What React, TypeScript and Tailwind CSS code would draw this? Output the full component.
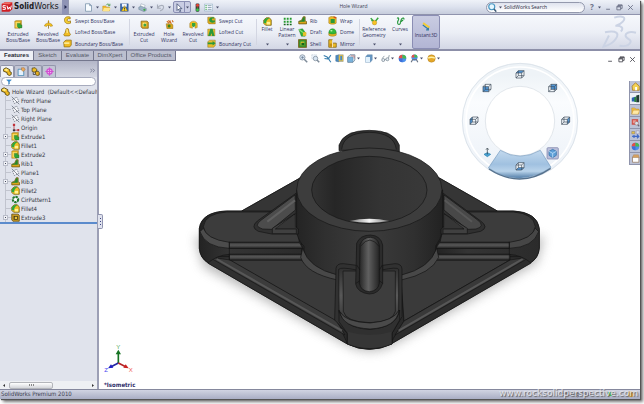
import type { ReactNode } from "react";

const glyphs: Record<string, ReactNode> = {
  extrude: (<><path d="M2 3l4-2h14v17l-4 4H2z" fill="#d9a51c" stroke="#8a6a12" /><path d="M4 5h12v15H4z" fill="#f8dc62" /><path d="M9 9h8v4l4 0v8h-9l-3-4z" fill="#30a53a" stroke="#14661d" /></>),
  revolve: (<><path d="M12 1v22" stroke="#8a6a12" strokeWidth="2" /><path d="M1 16c1-6 7-8 11-8s10 2 11 8l-6 1c-1-2-3-3-5-3s-4 1-5 3z" fill="#f2bf1d" stroke="#8a6a12" /><path d="M9 6l3-4 3 4z" fill="#c98d10" /></>),
  sweep: (<><path d="M19 3c-9-3-16 1-15 9 1 8 8 10 16 7v-6c-5 2-9 2-9-2s4-5 8-3z" fill="#f7cf2e" stroke="#9a7410" strokeWidth="2" /></>),
  loft: (<><path d="M8 3c3-3 7-2 7 2 0 5 2 8 5 12l-3 4H4l-2-4c4-3 5-8 6-14z" fill="#f3be22" stroke="#9a7410" strokeWidth="2" /><path d="M9 5c3-1 2 5 2 8" stroke="#fff2a0" strokeWidth="3" fill="none" /></>),
  boundary: (<><path d="M2 8l6-5h14v13l-4 5H3z" fill="#f0bb23" stroke="#92700f" strokeWidth="2" /><path d="M3 9h14v4H3z" fill="#fff0a0" /></>),
  cut: (<><path d="M3 3h16l3 3v16H6l-3-4z" fill="#dca61c" stroke="#826311" strokeWidth="2" /><path d="M7 7h10v10H7z" fill="#fae67b" /><circle cx="13" cy="13" r="4" fill="#3ba344" /></>),
  hole: (<><path d="M3 10h15l3 3v10H5z" fill="#d9a51c" stroke="#7a5b0d" /><circle cx="11" cy="16" r="4" fill="#37821f" /><path d="M8 9l7-7m-6-1l8 8m2-8l3 5M5 3l3 3" stroke="#d56a17" strokeWidth="3" /></>),
  revcut: (<><path d="M2 9c4-8 16-8 20 0v11l-6 2v-7H9v7l-7-2z" fill="#edbd23" stroke="#856410" /><path d="M8 8h9v7l-5 4-4-4z" fill="#35a53e" /></>),
  gsweep: (<><path d="M2 3h16l4 4v14H5l-3-4z" fill="#e0ac1e" stroke="#705810" /><path d="M19 4C8 2 5 7 6 12s8 8 15 4v-5c-4 2-8 1-8-2s3-3 6-2z" fill="#2b983a" /></>),
  gloft: (<><path d="M2 3h19v18H2z" fill="#e9bd2b" stroke="#705810" /><path d="M9 2h6l5 19h-6l-2-7-3 7H3z" fill="#2b983a" /></>),
  gbound: (<><path d="M2 7l5-4h15v14l-4 5H2z" fill="#e9bd2b" stroke="#705810" /><path d="M2 9h13V5l8 6-8 6v-3H2z" fill="#2b983a" /></>),
  fillet: (<><path d="M2 8l7-6h8l5 6v14H7L2 17z" fill="#efbf23" stroke="#6f5b0b" strokeWidth="2" /><path d="M2 15C2 5 9 2 17 3c-6 3-8 6-9 14z" fill="#2fa83a" /><path d="M10 13h9v7h-9z" fill="#fff293" /></>),
  pattern: (<><path d="M2 2h5v5H2zM10 2h5v5h-5zM18 2h5v5h-5zM2 10h5v5H2zM10 10h5v5h-5zM18 10h5v5h-5z" fill="#249a2f" /><path d="M2 18h5v4H2zM10 18h5v4h-5zM18 18h5v4h-5z" fill="#14661d" /></>),
  rib: (<><path d="M2 14l7-2 5-10h5v11l4 2v6H2z" fill="#d9a51c" stroke="#6a5410" strokeWidth="2" /><path d="M2 14l8-2 4-9h4v12H5z" fill="#26872f" /></>),
  draft: (<><path d="M2 4l10-2 9 12-2 8H9z" fill="#2eae38" stroke="#136c1d" /><path d="M13 11h9v10h-9z" fill="#eac02a" /><path d="M3 4l10 8" stroke="#85e276" strokeWidth="3" /></>),
  shell: (<><path d="M2 2h20v20H2z" fill="#2aa334" stroke="#725c10" strokeWidth="3" /><path d="M7 7h10v10H7z" fill="#efc32c" /><path d="M9 10h8v7H9z" fill="#14661d" /></>),
  wrap: (<><path d="M2 4c4-4 16-4 20 0v15c-4 4-16 4-20 0z" fill="#e9b824" stroke="#856410" /><path d="M7 8h11v11H7z" fill="#28993a" /><path d="M15 3l7 2" stroke="#d74d22" strokeWidth="4" /></>),
  dome: (<><path d="M2 13h20v6c-5 4-15 4-20 0z" fill="#e4b320" stroke="#7d610f" /><path d="M2 13C2-2 22-2 22 13c-5 4-15 4-20 0z" fill="#32b93b" stroke="#18751f" /><ellipse cx="9" cy="7" rx="3" ry="2" fill="#c1f6b0" /></>),
  mirror: (<><path d="M2 2h10v9h10v11H2z" fill="#ebbb27" stroke="#826311" strokeWidth="2" /><path d="M12 2v20" stroke="#fff" strokeWidth="2" /><path d="M4 12h7v8H4z" fill="#c38c14" /></>),
  refgeo: (<><path d="M2 3l8 9M22 2l-9 11" stroke="#37a83e" strokeWidth="4" /><path d="M3 10l6-1" stroke="#37a83e" strokeWidth="3" /><circle cx="12" cy="15" r="6" fill="#f6c325" stroke="#aa7210" /></>),
  curves: (<><path d="M3 4c3-4 6 0 3 5s-2 11 2 11c6 0 3-11 7-15s7-2 6 2M11 14l8-6" fill="none" stroke="#23953a" strokeWidth="3" /></>),
  instant: (<><path d="M3 3l17 12" stroke="#f4cd36" strokeWidth="5" /><path d="M2 8l16 12m-1-5v6h-6" stroke="#317ba5" strokeWidth="3" fill="none" /></>),
  doc: <path d="M4 2h11l5 5v15H4zM15 2v5h5" fill="#f8fcff" stroke="#7790a8" strokeWidth="2" />,
  open: (<><path d="M2 8h8l2 3h8v10H2z" fill="#f2bb32" stroke="#b18014" /><path d="M5 13h18l-4 9H2z" fill="#ffe58b" /><path d="M11 6c3-5 7-4 9 0m1-4v5h-5" fill="none" stroke="#38953d" strokeWidth="2" /></>),
  save: (<><path d="M1 2h21v20H1z" fill="#3465ad" stroke="#1d3e79" /><path d="M5 2h13v8H5z" fill="#eff5ff" /><path d="M12 7l8 14H4z" fill="#ffd52d" stroke="#8f6d00" /><path d="M12 12v5m0 1v2" stroke="#222" strokeWidth="2" /></>),
  print: (<><path d="M8 2l11 4-3 8-10-4z" fill="#fff" stroke="#708698" /><path d="M2 11l6-3 14 6v6l-6 3L2 17z" fill="#9cb3c6" stroke="#5d7287" /><circle cx="17" cy="18" r="3" fill="#42a948" /></>),
  undo: <path d="M4 4v10h9M4 13C10 4 22 4 20 13c-1 5-5 7-9 8" fill="none" stroke="#a8aebb" strokeWidth="3" />,
  cursor: <path d="M8 2v18l4-4 3 7 3-1-3-7h6z" fill="#fff" stroke="#36476c" strokeWidth="2" />,
  light: (<><rect x="7" y="1" width="10" height="22" rx="3" fill="#383c3e" /><circle cx="12" cy="6" r="4" fill="#e54336" /><circle cx="12" cy="12" r="2" fill="#736527" /><circle cx="12" cy="18" r="4" fill="#3dc54c" /></>),
  options: (<><path d="M1 3h22v18H1z" fill="#f4faff" stroke="#5a86a0" /><path d="M4 7h3M4 12h3M4 17h3" stroke="#3fa64a" strokeWidth="3" /><path d="M10 7h10M10 12h10M10 17h10" stroke="#7990a1" strokeWidth="2" /></>),
  part: (<><path d="M1 6l7-4 10 5v5l4 2v6l-5 3-6-4v-4L1 11z" fill="#edb922" stroke="#3c330d" strokeWidth="2" /><path d="M3 7l6-3 6 4-6 3z" fill="#ffed86" /></>),
  props: (<><path d="M3 6h15v17H3z" fill="#e6f2fd" stroke="#367fae" strokeWidth="2" /><path d="M12 2h7l3 5-6 5-4-4z" fill="#eba95d" stroke="#8d5a28" /></>),
  config: (<><path d="M3 3l8-1 4 4v5l-4 3-8-2z" fill="#efbd25" stroke="#4d4215" strokeWidth="2" /><path d="M12 12l7-1 3 4v6l-5 2-5-3z" fill="#e2ad22" stroke="#4d4215" strokeWidth="2" /><path d="M6 14v6h5" fill="none" stroke="#333" strokeWidth="2" /></>),
  target: (<><circle cx="12" cy="12" r="7" fill="#f3b5f2" stroke="#d150d1" strokeWidth="3" /><path d="M12 1v22M1 12h22" stroke="#d150d1" strokeWidth="3" /></>),
  plane: (<><path d="M4 9l11-6 6 11-12 6z" fill="#f6f7fa" stroke="#6a707c" strokeWidth="2" strokeDasharray="4 2" /><path d="M2 2l20 20" stroke="#6a707c" strokeWidth="2" /></>),
  origin: (<><path d="M8 3v16h12" fill="none" stroke="#b72d35" strokeWidth="2" /><path d="M5 2h6v6H5zM17 16h5v6h-5z" fill="#bf3039" /><path d="M5 17h6v5H5z" fill="#30343f" /></>),
  circ: (<><circle cx="12" cy="12" r="7" fill="none" stroke="#22782c" strokeWidth="6" strokeDasharray="6 2" /><circle cx="12" cy="12" r="4" fill="#fff" /></>),
  treecut: (<><path d="M2 3h17l3 3v16H5l-3-4z" fill="#cb9b22" stroke="#5a460b" strokeWidth="2" /><path d="M7 8h11v10H7z" fill="#443a15" /><path d="M10 10h6v6h-6z" fill="#e9c443" /></>),
  filter: <path d="M2 3h20l-8 8v9l-4 2V11z" fill="#348fd3" stroke="#1d5b9a" />,
  zoom: (<><circle cx="9" cy="9" r="7" fill="#d9e6f3" stroke="#7e8b99" strokeWidth="2" /><path d="M14 14l8 8" stroke="#7e8b99" strokeWidth="4" /><path d="M6 9h7M9 6v7" stroke="#65788c" strokeWidth="2" /></>),
  zoomarea: (<><path d="M2 2h13v11H2z" fill="#eef5fc" stroke="#90a1b2" strokeDasharray="3 2" /><circle cx="12" cy="12" r="6" fill="#d9e6f3" stroke="#7e8b99" strokeWidth="2" /><path d="M16 16l6 6" stroke="#7e8b99" strokeWidth="4" /></>),
  prev: <path d="M2 4l9 4 10 14M4 12l14 2M13 14l8-11" fill="none" stroke="#397eae" strokeWidth="3" />,
  section: (<><path d="M2 4l8-2v19l-8-2z" fill="#4a8bc2" stroke="#315c88" /><path d="M10 2h12v18H10z" fill="#edc33e" stroke="#5b779a" /><path d="M14 5h5v12h-5z" fill="#4a8bc2" /></>),
  orient: (<><path d="M2 8l6-6h13v14l-5 6H2z" fill="#d9edfc" stroke="#687d91" strokeWidth="2" /><path d="M2 8h14v14H2z" fill="#79b3dc" stroke="#687d91" /><path d="M10 5h9v7" fill="none" stroke="#bf6c67" strokeWidth="2" /></>),
  display: (<><path d="M4 8l5-6h13v14l-5 6H4z" fill="#6797c3" stroke="#56789a" /><path d="M4 8h12v14H4z" fill="#e2f1fc" /></>),
  glasses: (<><circle cx="6" cy="16" r="4" fill="#e9eff5" stroke="#778591" strokeWidth="2" /><circle cx="17" cy="14" r="4" fill="#e9eff5" stroke="#778591" strokeWidth="2" /><path d="M10 15l3-1M3 12l6-7M20 11l2-8" stroke="#778591" strokeWidth="2" /></>),
  ball: (<><circle cx="12" cy="12" r="10" fill="#4b91ec" /><path d="M12 12V2A10 10 0 0 0 2 12z" fill="#e74e46" /><path d="M12 12H2a10 10 0 0 0 10 10z" fill="#3f6fd8" /><path d="M12 12V2a10 10 0 0 1 10 10z" fill="#47b84e" /></>),
  scene: (<><circle cx="12" cy="9" r="8" fill="#4b91ec" /><path d="M12 9V1a8 8 0 0 0-8 8z" fill="#e74e46" /><path d="M12 9V1a8 8 0 0 1 8 8z" fill="#47b84e" /><path d="M3 22l4-7h10l4 7" fill="none" stroke="#697586" strokeWidth="3" /></>),
  sun: (<><circle cx="12" cy="12" r="10" fill="#e5a727" stroke="#9e711a" /><path d="M3 11c7-4 11-4 18 0" stroke="#fff1a5" strokeWidth="4" fill="none" /></>),
  mag: (<><circle cx="10" cy="10" r="8" fill="#e6f7ff" stroke="#4596c2" strokeWidth="3" /><path d="M16 16l6 7" stroke="#3d5974" strokeWidth="4" /></>),
  home: (<><path d="M3 11L12 2l10 9v11H4z" fill="#f3d254" stroke="#a7771d" strokeWidth="2" /><path d="M11 13h5v9h-5z" fill="#fff" /></>),
  library: (<><path d="M2 10l9-3v13H2z" fill="#2b5fae" /><path d="M9 10l5-4v15H9z" fill="#248b37" /><path d="M14 4l8-2v20h-8z" fill="#203b32" /></>),
  folder: (<><path d="M2 5h8l3 3h8v13H2z" fill="#eebd42" stroke="#b58127" /><path d="M6 11h17l-4 11H2z" fill="#ffe9a6" stroke="#b58127" /></>),
  photo: (<><path d="M2 3h17v15H2z" fill="#ce5049" /><path d="M5 6h9v8H5z" fill="#e89a94" /><circle cx="15" cy="14" r="5" fill="#d8e1e8" stroke="#844" /><path d="M18 18l4 4" stroke="#667" strokeWidth="3" /></>),
  view: (<><path d="M2 4h8v6H2z" fill="#e6c346" stroke="#765" /><path d="M14 2h8v8h-8z" fill="#d8e1ed" stroke="#879" /><path d="M8 21V13m-5 4h18m-5-5l5 5-5 5" fill="none" stroke="#3e68c7" strokeWidth="3" /></>),
  custom: (<><path d="M4 8h17v14H4z" fill="#fff" stroke="#967b63" strokeWidth="2" /><path d="M7 2h13l2 7H4z" fill="#d9a35f" stroke="#967b63" /></>),
};

function Icon({ name, className = "size-2" }: { name: string; className?: string }) {
  return <svg viewBox="0 0 24 24" fill="none" aria-hidden="true" className={`shrink-0 ${className}`}>{glyphs[name]}</svg>;
}

function Caret() {
  return <svg viewBox="0 0 6 6" aria-hidden="true" className="size-[3px] shrink-0"><path d="M0 1h6L3 5z" fill="#4a4f6b" /></svg>;
}

function BigButton({ icon, lines, width, caret = false }: { icon: string; lines: string[]; width: string; caret?: boolean }) {
  return (
    <button className={`flex h-full shrink-0 flex-col items-center pb-[3px] ${caret ? "pt-[2px]" : "pt-[5px]"} ${width}`}>
      <Icon name={icon} className={`size-[9px] ${caret ? "" : "mb-[2px]"}`} />
      {lines.map((l) => <span key={l} className="whitespace-nowrap">{l}</span>)}
      {caret && <span className="mt-auto"><Caret /></span>}
    </button>
  );
}

function SmallColumn({ items, width }: { items: [string, string][]; width: string }) {
  return (
    <div className={`flex h-full shrink-0 flex-col justify-between ${width}`}>
      {items.map(([icon, label]) => (
        <button key={label} className="flex h-[11px] items-center gap-[3px] whitespace-nowrap pl-px">
          <Icon name={icon} className="size-[9px]" />{label}
        </button>
      ))}
    </div>
  );
}

const Divider = () => <div className="my-1 w-px shrink-0 bg-[#d3d6e2]" />;

function Ribbon() {
  return (
    <div className="flex h-9 shrink-0 overflow-hidden border-b-2 border-[#8c8fa8] bg-linear-to-b from-[#f6f8fc] via-[#eceff6] to-[#d3d7e5] pl-[2px] font-['Open_Sans',sans-serif] text-[5px] leading-[6px] text-[#30335f]">
      <BigButton icon="extrude" lines={["Extruded", "Boss/Base"]} width="w-8" />
      <BigButton icon="revolve" lines={["Revolved", "Boss/Base"]} width="w-7" />
      <SmallColumn width="w-[67px]" items={[["sweep", "Swept Boss/Base"], ["loft", "Lofted Boss/Base"], ["boundary", "Boundary Boss/Base"]]} />
      <Divider />
      <BigButton icon="cut" lines={["Extruded", "Cut"]} width="w-7" />
      <BigButton icon="hole" lines={["Hole", "Wizard"]} width="w-[22px]" />
      <BigButton icon="revcut" lines={["Revolved", "Cut"]} width="w-[26px]" />
      <SmallColumn width="w-[50px]" items={[["gsweep", "Swept Cut"], ["gloft", "Lofted Cut"], ["gbound", "Boundary Cut"]]} />
      <Divider />
      <BigButton icon="fillet" lines={["Fillet"]} width="w-5" caret />
      <BigButton icon="pattern" lines={["Linear", "Pattern"]} width="w-5" caret />
      <SmallColumn width="w-[30px]" items={[["rib", "Rib"], ["draft", "Draft"], ["shell", "Shell"]]} />
      <SmallColumn width="w-8" items={[["wrap", "Wrap"], ["dome", "Dome"], ["mirror", "Mirror"]]} />
      <Divider />
      <BigButton icon="refgeo" lines={["Reference", "Geometry"]} width="w-7" caret />
      <BigButton icon="curves" lines={["Curves"]} width="w-6" caret />
      <button aria-pressed="true" className="flex w-7 shrink-0 flex-col items-center justify-center rounded-xs border border-[#8b8eb4] bg-linear-to-b from-[#c9cce2] to-[#b2b5d4] pb-1">
        <Icon name="instant" className="mb-px size-[9px]" />Instant3D
      </button>
      <svg viewBox="0 0 104 100" fill="none" aria-hidden="true" className="mr-[3px] ml-auto h-[33px] w-[35px] shrink-0">
        <g stroke="#cbd3e4" strokeWidth="6">
          <path d="M36 8c26-8 38 0 26 12-5 6-13 10-22 13 18-1 26 6 16 17" />
          <path d="M8 52c36-7 44 4 33 20-9 14-21 20-38 24l17-34" />
          <path d="M102 54c-22-6-34 2-31 11 3 8 20 9 13 20-5 8-17 11-32 8" />
        </g>
      </svg>
    </div>
  );
}

function WindowControls({ dark = false }: { dark?: boolean }) {
  return (
    <div className={`flex items-center gap-[3px] ${dark ? "text-[#4b4c54]" : "text-[#6b7187]"}`}>
      {[["Minimize", "M4 18h13"], ["Restore", "M7 8V3h14v12h-5M3 8h13v12H3zM3 10h13M7 5h14"], ["Close", "M4 4l16 16M20 4L4 20"]].map(([label, d]) => (
        <button key={label} aria-label={label} className="flex size-2 items-center justify-center">
          <svg viewBox="0 0 24 24" fill="none" stroke="currentColor" strokeWidth="3" className="size-[7px]"><path d={d} /></svg>
        </button>
      ))}
    </div>
  );
}

function TitleBar() {
  return (
    <header className="flex h-[15px] shrink-0 items-center border-b border-[#8f93ad] bg-linear-to-b from-[#eff2f8] via-[#dde2ee] to-[#c6ccdc] font-['Open_Sans',sans-serif] text-[5px]">
      <div className="flex h-full w-[69px] shrink-0 items-center gap-px border-r border-[#9599b0] bg-linear-to-b from-[#d5d7e2] to-[#a4a8bf] pl-px">
        <svg viewBox="0 0 36 30" aria-hidden="true" className="h-[10px] w-3 shrink-0">
          <path d="M2 6L12 1h22v21l-9 7H2z" fill="#cf1f25" /><path d="M2 6L12 1h22l-9 6z" fill="#ef6c64" />
          <path d="M14 11H6v5h7v6H5M18 11l3 11 4-7 3 7 3-11" fill="none" stroke="#fff" strokeWidth="3" />
        </svg>
        <h1 className="flex text-[8px] leading-3 text-[#17181c]">
          <span className="font-['DejaVu_Sans_Condensed','DejaVu_Sans',sans-serif] font-bold">Solid</span>
          <span className="font-['DejaVu_Sans',sans-serif]">Works</span>
        </h1>
        <button aria-label="Show menu" className="ml-auto flex h-full w-[6px] items-center justify-center bg-[#8f94b5]">
          <svg viewBox="0 0 6 8" className="h-1 w-[3px]"><path d="M1 0l5 4-5 4z" fill="#20264f" /></svg>
        </button>
      </div>
      <div className="ml-[14px] flex shrink-0 items-center">
        {["doc", "open", "save", "print", "undo"].map((n) => (
          <button key={n} aria-label={n} className="flex h-3 w-[18px] items-center gap-[3px] pl-px"><Icon name={n} className="size-[9px]" /><Caret /></button>
        ))}
        <button aria-label="Select" className="flex h-3 w-[18px] items-center rounded-xs border border-[#8b90b4] bg-[#c9cde3]">
          <Icon name="cursor" className="size-[9px]" /><span className="ml-px flex h-full items-center border-l border-[#8b90b4] pl-px"><Caret /></span>
        </button>
        <button aria-label="Rebuild" className="flex w-3 justify-center"><Icon name="light" className="size-[9px]" /></button>
        <button aria-label="Options" className="flex w-[18px] items-center gap-[3px] pl-px"><Icon name="options" className="size-[9px]" /><Caret /></button>
      </div>
      <span className="min-w-0 flex-1 whitespace-nowrap text-center text-[#3c3f55]">Hole Wizard</span>
      <label className="flex h-[11px] w-[99px] shrink-0 items-center gap-[2px] rounded-full border border-[#9499ad] bg-linear-to-b from-[#dfe3ee] to-white pl-px">
        <Icon name="mag" className="size-[9px]" /><Caret />
        <input aria-label="Search" defaultValue="SolidWorks Search" className="h-2 w-20 min-w-0 bg-transparent text-[#262a3c] outline-none" />
      </label>
      <div className="flex w-[55px] shrink-0 items-center pl-1">
        <button aria-label="Help" className="w-[6px] text-[8px] leading-3 font-bold text-[#6b7187]">?</button>
        <span className="mx-[3px] flex"><Caret /></span>
        <WindowControls />
      </div>
    </header>
  );
}

const tabs: [string, string][] = [["Features", "w-[34px]"], ["Sketch", "w-7"], ["Evaluate", "w-8"], ["DimXpert", "w-[33px]"], ["Office Products", "w-[49px]"]];

const tree: [string, string, boolean][] = [
  ["plane", "Front Plane", false], ["plane", "Top Plane", false], ["plane", "Right Plane", false], ["origin", "Origin", false],
  ["extrude", "Extrude1", true], ["fillet", "Fillet1", false], ["extrude", "Extrude2", true], ["rib", "Rib1", true],
  ["plane", "Plane1", false], ["rib", "Rib3", true], ["fillet", "Fillet2", false], ["circ", "CirPattern1", false],
  ["fillet", "Fillet4", false], ["treecut", "Extrude3", true],
];

function FeaturePanel() {
  return (
    <aside className="relative flex w-[99px] shrink-0 flex-col border-r-2 border-[#9c9fb5] bg-[#e0e3ec] font-['DejaVu_Sans_Condensed','DejaVu_Sans',sans-serif] text-[6px] leading-[9px] text-[#333641]">
      <div className="flex h-4 shrink-0 items-end bg-linear-to-b from-[#b3b6c8] to-[#d5d8e3]">
        {["part", "props", "config", "target"].map((n, i) => (
          <button key={n} aria-label={n} className={`flex h-3 w-[14px] items-center justify-center rounded-t-xs border border-b-0 border-[#9396ab] ${i === 0 ? "bg-[#eff1f6]" : "bg-[#c2c5d4]"}`}><Icon name={n} className="size-[9px]" /></button>
        ))}
        <button aria-label="Expand panel" className="mr-[2px] mb-1 ml-auto flex"><svg viewBox="0 0 14 14" fill="none" stroke="#656a83" strokeWidth="2" className="size-[5px]"><path d="M1 2l5 5-5 5M8 2l5 5-5 5" /></svg></button>
      </div>
      <label className="mx-px flex h-[9px] shrink-0 items-center rounded-full border border-[#a7abbd] bg-white pl-1">
        <Icon name="filter" className="size-[6px]" />
        <input aria-label="Filter tree" className="h-[7px] w-full min-w-0 bg-transparent outline-none" />
      </label>
      <div className="mt-px flex h-[9px] shrink-0 items-center gap-[2px] overflow-hidden whitespace-pre pl-px"><Icon name="part" className="size-[9px]" />Hole Wizard  (Default&lt;&lt;Default</div>
      <ul className="border-b-2 border-[#5b8bcc]">
        {tree.map(([icon, label, expandable]) => (
          <li key={label} className="flex h-[9px] items-center">
            <span className="relative ml-[5px] flex h-full w-[6px] shrink-0 items-center">
              <span className="h-px w-full bg-[#c1c4ce]" />
              <span className="absolute inset-y-0 left-0 w-px bg-[#c1c4ce]" />
              {expandable && <button aria-label={`Expand ${label}`} className="absolute top-[2px] -left-[2px] flex size-[5px] items-center justify-center border border-[#b9bdc9] bg-[#f2f3f7]"><span className="size-px bg-[#42485c]" /></button>}
            </span>
            <Icon name={icon} className="size-[9px]" /><span className="ml-px">{label}</span>
          </li>
        ))}
      </ul>
      <div className="mt-auto flex h-2 shrink-0 items-center justify-between bg-[#eef0f3] px-[3px]">
        <svg viewBox="0 0 4 6" className="h-[3px] w-[2px]"><path d="M4 0v6L0 3z" fill="#333" /></svg>
        <span className="mr-auto ml-1 flex h-[7px] w-11 items-center justify-center gap-px rounded-xs border border-[#b3b5ba] bg-linear-to-b from-white to-[#d3d5d9]">
          <span className="h-[2px] w-px bg-[#888]" /><span className="h-[2px] w-px bg-[#888]" /><span className="h-[2px] w-px bg-[#888]" />
        </span>
        <svg viewBox="0 0 4 6" className="h-[3px] w-[2px]"><path d="M0 0v6l4-3z" fill="#333" /></svg>
      </div>
      <button aria-label="Resize panel" className="absolute top-[153px] -right-[6px] z-10 flex h-[15px] w-[5px] flex-col items-center justify-center gap-[2px] rounded-r-xs border border-l-0 border-[#9094b0] bg-[#dfe2ed]">
        <span className="size-px bg-[#3d4384]" /><span className="size-px bg-[#3d4384]" /><span className="size-px bg-[#3d4384]" />
      </button>
    </aside>
  );
}

function Casting() {
  return (
    <svg viewBox="0 0 1080 705" role="img" aria-label="Cast flange part" className="h-[235px] w-[360px] shrink-0 overflow-visible">
      <defs>
        <linearGradient id="bore"><stop stopColor="#333" /><stop offset=".2" stopColor="#262626" /><stop offset=".6" stopColor="#343434" /><stop offset="1" stopColor="#393939" /></linearGradient>
        <linearGradient id="hub"><stop stopColor="#242424" /><stop offset=".2" stopColor="#303030" /><stop offset=".5" stopColor="#3c3c3c" /><stop offset=".8" stopColor="#303030" /><stop offset="1" stopColor="#222" /></linearGradient>
        <linearGradient id="ridge"><stop stopColor="#252525" /><stop offset=".45" stopColor="#606060" /><stop offset="1" stopColor="#242424" /></linearGradient>
        <linearGradient id="edge" x2="0" y2="1"><stop stopColor="#303030" /><stop offset=".45" stopColor="#585858" /><stop offset="1" stopColor="#292929" /></linearGradient>
        <linearGradient id="side"><stop stopColor="#232323" /><stop offset=".3" stopColor="#343434" /><stop offset="1" stopColor="#2b2b2b" /></linearGradient>
        <linearGradient id="gleam"><stop stopColor="#777" /><stop offset=".5" stopColor="#f5f5f5" /><stop offset="1" stopColor="#777" /></linearGradient>
        <filter id="haze" x="-20%" y="-20%" width="140%" height="140%"><feGaussianBlur stdDeviation="16" /></filter>
      </defs>
      <path d="M15 350L40 440 480 680Q540 705 600 680L1040 430 1062 350z" fill="#888" opacity=".6" filter="url(#haze)" />
      <g stroke="#141414" strokeWidth="2" strokeLinejoin="round">
        <path d="M155 273L330 174H748L922 273H970Q1045 278 1048 330V385Q1045 415 1020 430L603 672Q535 704 472 672L55 430Q30 414 28 385V325Q35 276 110 273z" fill="#292929" />
        <path d="M155 273L330 174H748L922 273 800 320H280z" fill="#353535" />
        <path d="M447 92V75Q462 31 538 31 612 31 628 75V96z" fill="#303030" />
        <path d="M455 88Q460 38 538 37 612 38 619 88" fill="#3a3a3a" />
        <path d="M55 410H335L445 480 440 603 465 655 472 672 55 430z" fill="#303030" />
        <path d="M1022 410H738L633 480 642 603 610 655 603 672 1022 430z" fill="#2c2c2c" />
        <path d="M118 420H335Q362 455 443 477L437 603z" fill="#3a3a3a" />
        <path d="M960 420H740Q710 455 633 477L642 603z" fill="#3a3a3a" />
        <path d="M55 410L120 420 440 603 465 645z" fill="#3c3c3c" />
        <path d="M1022 410L960 420 642 603 615 645z" fill="#393939" />
        <path d="M80 417L456 632M998 417L626 632" fill="none" stroke="#575757" strokeWidth="6" />
        <path d="M28 325Q35 276 110 273H250L335 365V403H118Q80 406 55 428Q30 414 28 385z" fill="url(#side)" />
        <path d="M30 335Q45 382 118 385H338L328 362H118Q55 360 40 325z" fill="#4c4c4c" />
        <path d="M40 320Q45 280 110 276H280L325 345 328 367H118Q45 357 40 320z" fill="#3c3c3c" />
        <path d="M1048 325Q1040 276 970 273H830L740 365V403H958Q996 406 1022 428Q1045 414 1048 385z" fill="url(#side)" />
        <path d="M1046 335Q1031 382 958 385H738L750 362H958Q1020 360 1036 325z" fill="#464646" />
        <path d="M1036 320Q1031 280 970 276H795L755 345 750 367H958Q1030 357 1036 320z" fill="#3c3c3c" />
        <path d="M118 367H328L338 385H118z" fill="url(#edge)" /><path d="M749 367H958V385H738z" fill="url(#edge)" />
        <path d="M118 403H330Q340 400 338 420H118z" fill="url(#edge)" /><path d="M740 403H960V420H738z" fill="url(#edge)" />
        <path d="M118 365V420M958 365V420" />
        <path d="M320 210V340Q330 370 342 378V420Q360 455 443 467L540 520 634 467Q713 455 737 420V378Q752 360 758 330V210z" fill="url(#hub)" />
        <path d="M338 385Q356 445 443 465V480Q348 460 332 412zM740 385Q720 445 634 465V480Q725 460 746 412z" fill="#484848" />
        <path d="M318 220L202 303Q180 322 205 334L245 342H325V327L318 322z" fill="#303030" />
        <path d="M315 225L214 300Q188 319 218 327L245 328 316 270z" fill="#4c4c4c" />
        <path d="M315 241L232 305" stroke="#606060" strokeWidth="6" />
        <path d="M316 281L256 327H319V341H247V325z" fill="#404040" />
        <path d="M312 285L260 324H314z" fill="#363636" stroke="none" />
        <path d="M760 220L872 303Q898 322 872 334L832 342H753V327L760 322z" fill="#303030" />
        <path d="M762 225L863 300Q887 319 858 327L832 328 762 270z" fill="#484848" />
        <path d="M764 241L846 305" stroke="#585858" strokeWidth="6" />
        <path d="M762 281L822 327H759V341H832V325z" fill="#404040" />
        <path d="M766 285L818 324H764z" fill="#363636" stroke="none" />
        <ellipse cx="538" cy="209" rx="218" ry="125" fill="#3d3d3d" />
        <ellipse cx="538" cy="210" rx="173" ry="101" fill="url(#bore)" />
        <path d="M478 303Q538 290 598 303Q538 314 478 303z" fill="url(#gleam)" stroke="none" />
        <path d="M438 445Q440 430 460 431L500 436V455H460V580Q470 607 540 608 608 606 615 580V455H578V436L615 431Q635 431 636 447V590L606 640V672Q540 704 472 672V640L434 600z" fill="#313131" />
        <path d="M446 448Q452 440 500 450H575Q622 440 626 448V575Q625 620 540 628 452 620 447 575z" fill="url(#edge)" />
        <path d="M459 453H616V574Q610 606 540 608 467 606 460 574z" fill="#3d3d3d" />
        <path d="M447 570Q460 625 540 628 620 622 629 570V600L606 640V672Q540 700 472 672V640L447 605z" fill="#303030" />
        <path d="M450 575Q465 606 540 609 613 603 627 570Q620 623 540 627 456 622 450 575z" fill="#4a4a4a" />
        <path d="M474 635Q540 655 604 635V671Q540 697 474 671z" fill="#363636" stroke="none" />
        <path d="M500 370Q510 345 542 345 572 347 578 375V490Q568 522 538 522 502 518 497 492z" fill="#2b2b2b" />
        <path d="M510 374Q518 352 542 352 563 353 568 375V490Q564 513 538 515 512 513 508 490z" fill="url(#ridge)" />
        <path d="M512 378Q540 342 567 379M498 490L510 482M578 490L568 482M500 435L510 450M577 435L568 450" fill="none" />
      </g>
    </svg>
  );
}

function Cube({ x, y, face = "" }: { x: number; y: number; face?: string }) {
  return (
    <g transform={`translate(${x} ${y})`} strokeLinejoin="round">
      <path d="M-12-4l7-7h17v15l-7 7H-12z" fill="#f3f8fc" />
      <path d={face} fill="#5297d6" />
      <path d="M-12-4l7-7h17v15l-7 7H-12zM-12-4H5v15M5-4l7-7M-5-11V4h17M-5 4l-7 7" fill="none" stroke="#3c4a57" strokeWidth="2" />
    </g>
  );
}

function ViewWheel() {
  return (
    <svg viewBox="0 0 360 360" role="img" aria-label="View selector" className="absolute top-0 right-[60px] size-[120px]">
      <defs>
        <linearGradient id="ring" x2="0" y2="1"><stop stopColor="#eef3f7" /><stop offset=".3" stopColor="#fafcfe" /><stop offset="1" stopColor="#edf2f8" /></linearGradient>
        <linearGradient id="pick" x2="0" y2="1"><stop stopColor="#c3d9ee" /><stop offset=".5" stopColor="#a0c1e0" /><stop offset=".75" stopColor="#b9d3ea" /><stop offset="1" stopColor="#527da7" /></linearGradient>
      </defs>
      <circle cx="180" cy="180" r="139" fill="none" stroke="url(#ring)" strokeWidth="70" />
      <circle cx="180" cy="180" r="173" fill="none" stroke="#dde4eb" strokeWidth="3" />
      <circle cx="180" cy="180" r="162" fill="none" stroke="#fff" strokeWidth="5" />
      <circle cx="180" cy="180" r="104" fill="#fff" stroke="#e2e7ec" strokeWidth="3" />
      <path d="M121 268Q180 303 241 268L273 319Q180 383 85 321z" fill="url(#pick)" stroke="#759bc0" strokeWidth="2" />
      <path d="M87 324Q180 385 272 322" fill="none" stroke="#55718d" strokeWidth="4" />
      <Cube x={180} y={40} face="M-12-4l7-7h17l-7 7z" /><Cube x={278} y={81} face="M-5-11h17V4H-5z" />
      <Cube x={317} y={179} face="M5-4l7-7V4l-7 7z" /><Cube x={180} y={316} face="M-12 11l7-7h17l-7 7z" />
      <Cube x={42} y={179} face="M-12-4l7-7V4l-7 7z" /><Cube x={81} y={81} face="M-12-4H5v15h-17z" />
      <path d="M72 280l10-5 10 5-10 7z" fill="#49a3d5" stroke="#247bab" strokeWidth="2" /><path d="M82 280v-17m-4 3l4-5 4 5" fill="none" stroke="#25333d" strokeWidth="2" />
      <rect x="261" y="260" width="34" height="34" rx="3" fill="#babfda" stroke="#777da6" strokeWidth="2" />
      <path d="M278 265l11 6v12l-11 7-11-7v-12z" fill="#5e9fd7" stroke="#2d6ba4" strokeWidth="2" /><path d="M267 271l11 6 11-6M278 277v13" fill="none" stroke="#d5edff" strokeWidth="2" />
    </svg>
  );
}

const hud: [string, boolean][] = [["zoom", false], ["zoomarea", false], ["prev", false], ["section", false], ["orient", true], ["display", true], ["glasses", true], ["ball", false], ["scene", true], ["sun", true]];

function Viewport() {
  return (
    <main className="relative flex min-w-0 flex-1 justify-center bg-white pt-[59px]">
      <Casting />
      <div className="absolute -top-[7px] left-[200px] flex items-center">
        {hud.map(([n, menu]) => (
          <button key={n} aria-label={n} className={`flex items-center gap-px ${menu ? "w-[17px]" : "w-3"}`}><Icon name={n} className="size-[9px]" />{menu && <Caret />}</button>
        ))}
      </div>
      <div className="absolute -top-[6px] right-1"><WindowControls dark /></div>
      <ViewWheel />
      <nav aria-label="Task pane" className="absolute top-5 right-0 flex w-[11px] flex-col border-l border-[#8f94ac]">
        {["home", "library", "folder", "photo", "view", "ball", "custom"].map((n, i) => (
          <button key={n} aria-label={n} className={`flex h-3 items-center justify-center border-b border-[#8f94ac] ${i === 1 ? "bg-[#edf0f6]" : "bg-[#bcc2d6]"}`}><Icon name={n} className="size-[9px]" /></button>
        ))}
      </nav>
      <svg viewBox="0 0 90 90" role="img" aria-label="Axes" className="absolute bottom-[15px] left-[5px] size-[30px] font-['Liberation_Sans',sans-serif] text-[18px]">
        <path d="M43 57V23" stroke="#167323" strokeWidth="5" /><path d="M35 31l8-14 8 14z" fill="#167323" />
        <path d="M43 57L20 69" stroke="#2427a1" strokeWidth="5" /><path d="M12 73l9-12 7 10z" fill="#2020c5" />
        <path d="M43 57l22 11" stroke="#b42526" strokeWidth="5" /><path d="M74 73l-16-2 7-10z" fill="#cb2222" />
        <text x="37" y="15" fill="#54a858">Y</text><text x="1" y="84" fill="#4646f0">Z</text><text x="74" y="84" fill="#ef5c54">X</text>
      </svg>
      <span className="absolute bottom-0 left-[5px] font-['DejaVu_Sans_Condensed','DejaVu_Sans',sans-serif] text-[6px] leading-2 font-bold text-[#30306b]">*Isometric</span>
    </main>
  );
}

export default function App() {
  return (
    <div className="h-screen overflow-hidden bg-white pr-1 pb-[5px]">
      <div className="relative flex h-full flex-col bg-white shadow-[1px_1px_1px_#555,3px_3px_3px_#777]">
        <TitleBar />
        <Ribbon />
        <nav className="flex h-[10px] shrink-0 font-['Liberation_Sans',sans-serif] text-[6px] leading-[9px]">
          {tabs.map(([label, width], i) => (
            <button key={label} className={`shrink-0 border-r border-b border-[#74778d] whitespace-nowrap ${width} ${i === 0 ? "bg-[#eef0f6] font-bold text-[#292b35]" : "bg-[#bcbfcf] text-[#555967]"}`}>{label}</button>
          ))}
        </nav>
        <div className="flex min-h-0 flex-1"><FeaturePanel /><Viewport /></div>
        <footer className="h-[10px] shrink-0 border-t border-[#85889d] bg-linear-to-b from-[#d1d4e2] to-[#a9aec4] pl-px font-['DejaVu_Sans_Condensed','DejaVu_Sans',sans-serif] text-[6px] leading-2 text-[#3c404e]">
          <div className="flex items-center justify-between"><span>SolidWorks Premium 2010</span><span className="flex items-center gap-4 pr-[6px]">Editing Part<span className="size-1 bg-[#4fbd50]" /><span className="size-[6px] rounded-full bg-[#e6a72c]" /></span></div>
        </footer>
        <div className="absolute right-[2px] bottom-0 font-['DejaVu_Sans',sans-serif] text-[9px] leading-3 text-[#e4e5ea] [text-shadow:1px_1px_1px_#555]">www.rocksolidperspective.com</div>
      </div>
    </div>
  );
}
